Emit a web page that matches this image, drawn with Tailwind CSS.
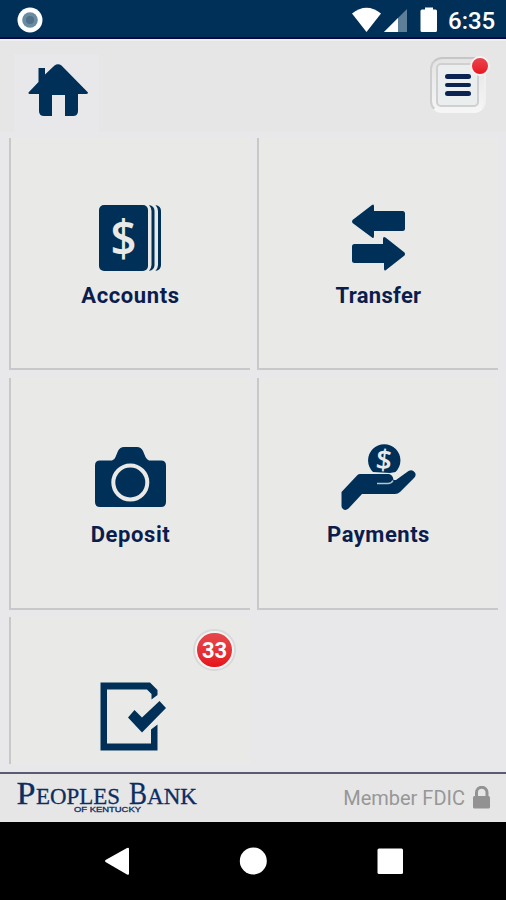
<!DOCTYPE html>
<html lang="en">
  <head>
    <meta charset="UTF-8" />
    <meta name="viewport" content="width=device-width, initial-scale=1.0" />
    <title>Peoples Bank of Kentucky</title>
    <script src="https://cdn.jsdelivr.net/npm/@tailwindcss/browser@4"></script>
  </head>

  <body class="w-[506px] h-[900px] overflow-hidden flex flex-col bg-[#e8e8ea] font-[Roboto,sans-serif] text-[#0b1d4d]">

    <!-- Status bar -->
    <div class="h-[39px] shrink-0 bg-[#003057] border-b-2 border-[#080a48] flex items-start justify-between">
      <svg class="w-[60px] h-[37px]" viewBox="0 0 60 37">
        <circle cx="30" cy="20" r="12.5" fill="#fff" />
        <circle cx="30" cy="20" r="7.8" fill="#6b8ba1" />
        <circle cx="30" cy="20" r="4" fill="#4f7189" />
      </svg>
      <div class="flex text-white">
        <svg class="w-[98px] h-[37px]" viewBox="350 0 98 37" fill="#fff">
          <path d="M352 13.500Q366.500 2 381 13.500L366.500 32Z" />
          <path d="M407 9V32H384Z" fill="#5d7f98" />
          <path d="M398 18V32H384Z" />
          <path d="M425 7.500H433V9.500H435.500Q437 9.500 437 11V30.500Q437 32 435.500 32H422Q420.500 32 420.500 30.500V11Q420.500 9.500 422 9.500H425Z" />
        </svg>
        <span class="w-[58px] text-[24px] leading-[43px] font-medium">6:35</span>
      </div>
    </div>

    <!-- Header -->
    <header class="h-[93px] shrink-0 bg-[#e6e6e6] border-t-2 border-[#efeff0] flex justify-between">
      <div class="ml-[14px] mt-[13px] w-[85px] h-[78px] bg-[#e8e8ea]">
        <svg class="w-[85px] h-[78px]" viewBox="14 54 85 78" fill="#003057">
          <path d="M54.500 65.500Q58 63 61.500 65.500L88 92.500Q88 94 86 94H78V111Q78 116 73 116H65V95H52V116H44Q39 116 39 111V94H30Q28 94 28.500 92.500L38.500 82V68H45V74.500Z" />
        </svg>
      </div>
      <!-- Menu button -->
      <div class="relative mt-[16px] mr-5 w-[56px] h-[56px] rounded-[12px] bg-linear-to-b from-[#e4e4e4] to-[#f6f6f6] border-2 border-t-[#c6c6c6] border-l-[#cecece] border-r-[#f0f0f0] border-b-[#f6f6f6] p-[4px]">
        <div class="w-[43px] h-[44px] rounded-[5px] border-2 border-[#d0d0d0] bg-[#ebeeef] flex flex-col items-center justify-center gap-[4px]">
          <div class="w-[26px] h-[4.500px] rounded-full bg-[#0a2352]"></div>
          <div class="w-[26px] h-[4.500px] rounded-full bg-[#0a2352]"></div>
          <div class="w-[26px] h-[4.500px] rounded-full bg-[#0a2352]"></div>
        </div>
        <span class="absolute -top-[3px] -right-[6px] w-[20px] h-[20px] rounded-full border-2 border-[#f6f2f2] bg-linear-to-b from-[#e8434c] to-[#ea1020]"></span>
      </div>
    </header>

    <!-- Tiles -->
    <main class="h-[640px] shrink-0 overflow-hidden pt-[6px] pl-[9px] pr-2">
      <div class="h-[626px] overflow-hidden grid grid-cols-2 auto-rows-[232px] gap-x-[7px] gap-y-[7.500px] text-[22px] leading-[26px] font-bold tracking-[0.6px]">

        <div class="pt-[65px] flex flex-col items-center bg-[#e9eae8] border-l-2 border-b-2 border-[#c8c8c9]">
          <svg class="w-[80px] h-[70px]" viewBox="91 203 80 70" fill="#003057">
            <rect x="99" y="205" width="49" height="66" rx="5" />
            <path d="M149 205Q154.500 206 154.500 211V265Q154.500 270 149 271Q151.500 268 151.500 265V211Q151.500 208 149 205Z" />
            <path d="M155.500 205Q161 206 161 211V265Q161 270 155.500 271Q158 268 158 265V211Q158 208 155.500 205Z" />
            <text x="123.500" y="256" text-anchor="middle" letter-spacing="0" font-family="Open Sans" font-weight="600" font-size="50" textLength="26" lengthAdjust="spacingAndGlyphs" fill="#e9eae8">$</text>
          </svg>
          <span class="mt-[10px]">Accounts</span>
        </div>

        <div class="pt-[65px] flex flex-col items-center bg-[#e9eae8] border-l-2 border-b-2 border-[#c8c8c9]">
          <svg class="w-[80px] h-[70px]" viewBox="339 203 80 70" fill="#003057">
            <path d="M352.500 220Q351.500 221.500 352.500 223L372 237.500Q374 239 374 236V231H402.500Q405 231 405 228.500V213.500Q405 211 402.500 211H374V206.500Q374 203.500 372 205Z" />
            <path d="M404.500 252.500Q405.500 254 404.500 255.500L386 270Q384 271.500 384 268.500V263H354.500Q352 263 352 260.500V246.500Q352 244 354.500 244H383V239Q383 236 385.500 237.500Z" />
          </svg>
          <span class="mt-[10px] tracking-[0.3px]">Transfer</span>
        </div>

        <div class="pt-[65px] flex flex-col items-center bg-[#e9eae8] border-l-2 border-b-2 border-[#c8c8c9]">
          <svg class="w-[80px] h-[70px]" viewBox="91 443 80 70" fill="#003057">
            <path d="M100 460.500H112Q114.500 460 115.500 457L118 451Q120 447 124 447H137Q141 447 143 451L145.500 457Q147 460 149 460.500H161Q166 460.500 166 465.500V502Q166 507 161 507H100Q95 507 95 502V465.500Q95 460.500 100 460.500Z" />
            <circle cx="130.300" cy="482.500" r="17" fill="none" stroke="#e9eae8" stroke-width="4" />
          </svg>
          <span class="mt-[9px]">Deposit</span>
        </div>

        <div class="pt-[65px] flex flex-col items-center bg-[#e9eae8] border-l-2 border-b-2 border-[#c8c8c9]">
          <svg class="w-[80px] h-[70px]" viewBox="339 443 80 70" fill="#003057">
            <path d="M373 472A16.200 16.200 0 1 1 395.500 472L390 473Z" />
            <text x="384" y="470" text-anchor="middle" letter-spacing="0" font-family="Open Sans" font-weight="600" font-size="28" transform="rotate(6 384 460)" fill="#e9eae8">$</text>
            <path d="M357.500 475Q358.500 474 360 474H389Q393 475 393.500 480H396L408.500 471Q412 469 414.500 472Q417 475 414 478L400 492Q398 494 395 494H362L348.500 508.500Q345.500 511 343 509Q341.500 508 341.500 506V492Z" />
            <path d="M377 483.500H388Q391.500 483.500 393 480.500" fill="none" stroke="#b7c3cc" stroke-width="1.600" />
          </svg>
          <span class="mt-[9px] tracking-[0.5px]">Payments</span>
        </div>

        <div class="relative pt-[65px] flex flex-col items-center bg-[#e9eae8] border-l-2 border-b-2 border-[#c8c8c9]">
          <svg class="w-[80px] h-[70px]" viewBox="91 682 80 70" fill="#003057">
            <path d="M100.500 682.500H150L157.500 690V695L151.500 699.500V694L147 689.500H107V743.500H151V729.500L157.500 724.500V750.500H100.500Z" />
            <path d="M128 717.500L134.500 710L142 717.500L159.500 701L166 708L142 732.500Z" />
          </svg>
          <!-- Counter badge -->
          <span class="absolute top-[12px] right-[14px] w-[43px] h-[42px] rounded-full border-2 border-[#d8d9d9] bg-[#f3f3f3] p-[2px] flex">
            <span class="flex-1 rounded-full bg-linear-to-b from-[#e4484e] to-[#e60f1a] text-white tracking-normal pt-px flex items-center justify-center">33</span>
          </span>
        </div>

      </div>
    </main>

    <!-- Footer -->
    <footer class="h-[50px] shrink-0 bg-[#e6e6e6] border-t-2 border-[#5a5a72] flex justify-between">
      <svg class="w-[210px] h-[48px]" viewBox="0 774 210 48" fill="#0c2d62" stroke="#0c2d62" stroke-width="0.3" font-family="Liberation Serif, serif">
        <text x="16.500" y="804" font-size="31" textLength="19" lengthAdjust="spacingAndGlyphs">P</text>
        <text x="36" y="804" font-size="23.500" textLength="84" lengthAdjust="spacingAndGlyphs">EOPLES</text>
        <text x="129" y="804" font-size="31" textLength="18" lengthAdjust="spacingAndGlyphs">B</text>
        <text x="147" y="804" font-size="23.500" textLength="50" lengthAdjust="spacingAndGlyphs">ANK</text>
        <text x="74" y="812" font-size="7.500" textLength="67" lengthAdjust="spacingAndGlyphs" font-family="Liberation Sans, sans-serif">OF KENTUCKY</text>
      </svg>
      <div class="flex items-center gap-2 pr-[15px] text-[20px] text-[#979797]">
        <span>Member FDIC</span>
        <svg class="w-[18px] h-[24px]" viewBox="473 786 18 24">
          <path d="M476.500 797V792.500A5.200 5.200 0 0 1 487 792.500V797" fill="none" stroke="#929292" stroke-width="3" />
          <rect x="473" y="796" width="17" height="12.500" rx="1.500" fill="#929292" />
        </svg>
      </div>
    </footer>

    <!-- Android navigation -->
    <nav class="h-[78px] shrink-0 bg-black">
      <svg class="w-[506px] h-[78px]" viewBox="0 822 506 78" fill="#fff">
        <path d="M105.500 860Q104.500 861 105.500 862L127 874.500Q129 875.500 129 873.500V849Q129 847 127 848Z" />
        <circle cx="253.300" cy="861" r="13.500" />
        <rect x="377.500" y="848.500" width="25.500" height="25.500" rx="1.500" />
      </svg>
    </nav>

  </body>
</html>
